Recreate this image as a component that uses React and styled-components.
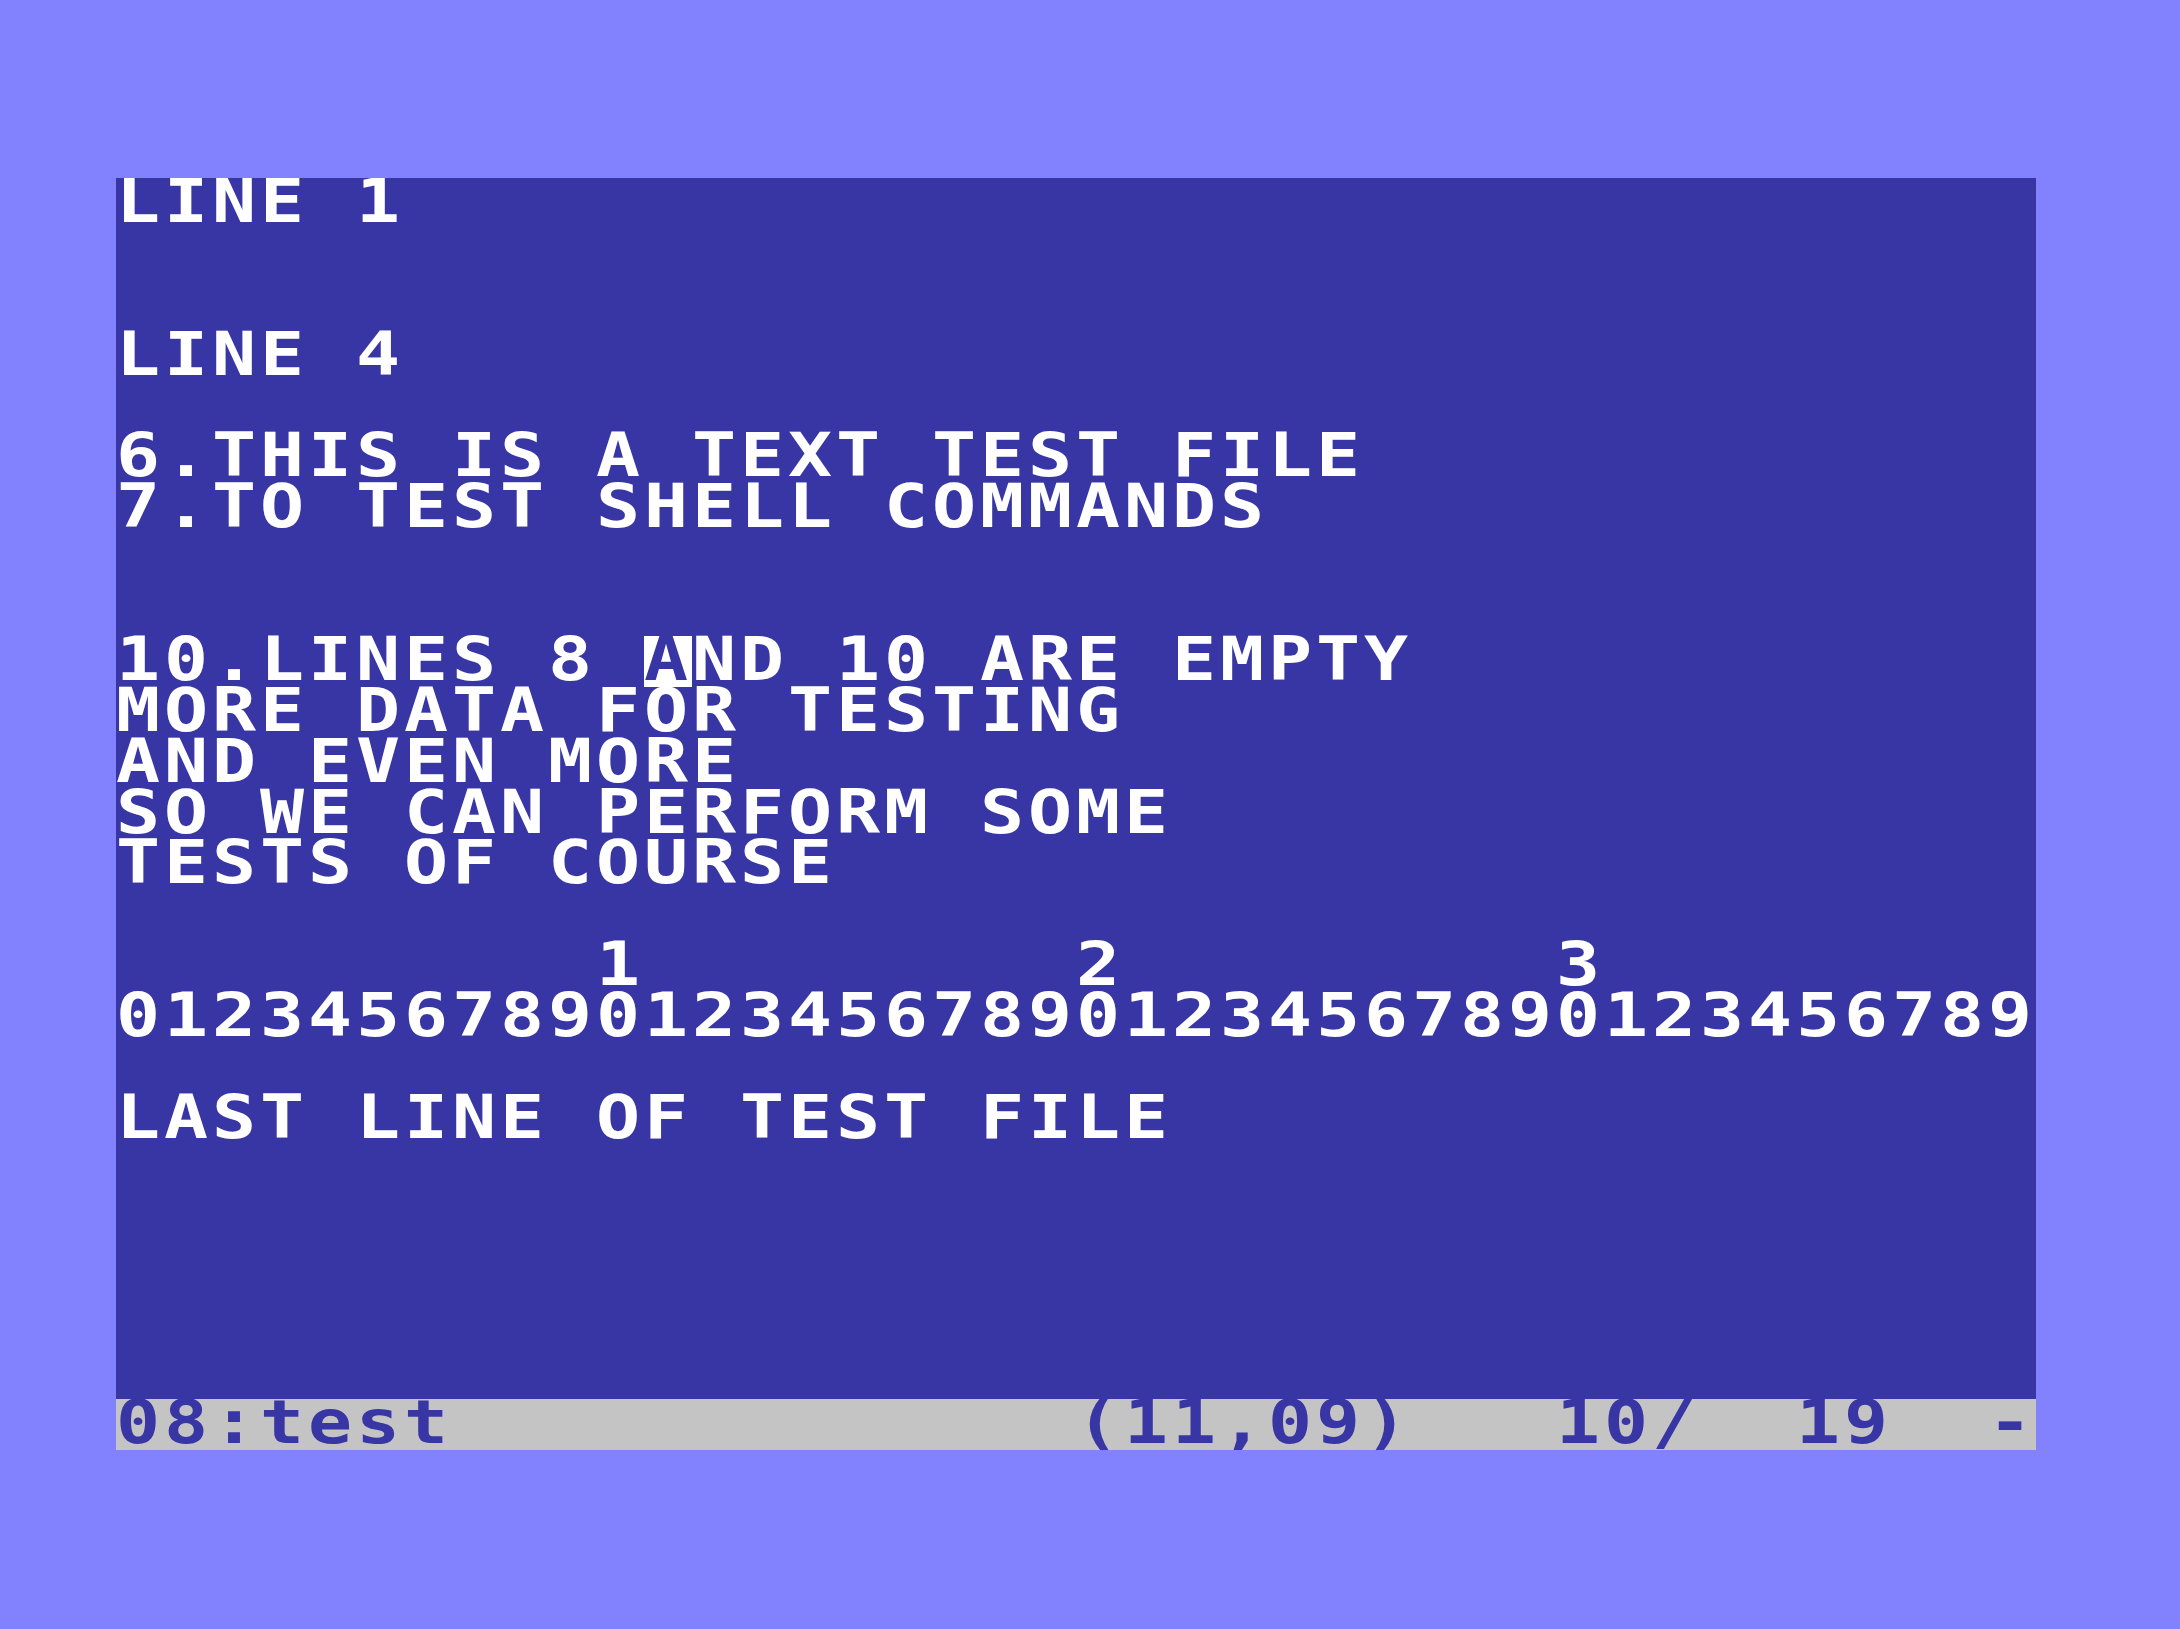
import styled, { createGlobalStyle } from "styled-components";

const BORDER = "#8382fe";
const SCREEN = "#3736a4";
const INK = "#ffffff";
const BAR = "#c4c4c4";

const Global = createGlobalStyle`
  html, body {
    margin: 0;
    padding: 0;
    background: ${BORDER};
  }
`;

const Frame = styled.div`
  width: 2180px;
  height: 1629px;
  box-sizing: border-box;
  padding: 178px 0 0 116px;
  background: ${BORDER};
`;

const Screen = styled.div`
  width: 1920px;
  height: 1272px;
  background: ${SCREEN};
  display: grid;
  grid-template-rows: repeat(25, 1fr);
  overflow: hidden;
`;

const Row = styled.div`
  background: ${props => (props.$status ? BAR : "transparent")};
  overflow: visible;
`;

// C64 cells are 8 wide pixels: the text is stretched sideways by 1.2
// so 40 columns of 40px fill the 1920px screen.
const Text = styled.div`
  width: 1600px;
  transform: scaleX(1.2);
  transform-origin: left top;
  font-family: "DejaVu Sans Mono", "Liberation Mono", monospace;
  font-weight: bold;
  font-size: 61px;
  letter-spacing: 3.275px;
  line-height: 46.8px;
  white-space: pre;
  color: ${props => (props.$status ? SCREEN : INK)};
`;

const Cursor = styled.span`
  display: inline-block;
  width: 40px;
  height: 50.88px;
  vertical-align: top;
  background: ${INK};
  color: ${SCREEN};
`;

const lines = [
  "LINE 1",
  "",
  "",
  "LINE 4",
  "",
  "6.THIS IS A TEXT TEST FILE",
  "7.TO TEST SHELL COMMANDS",
  "",
  "",
  null,
  "MORE DATA FOR TESTING",
  "AND EVEN MORE",
  "SO WE CAN PERFORM SOME",
  "TESTS OF COURSE",
  "",
  "          1         2         3",
  "0123456789012345678901234567890123456789",
  "",
  "LAST LINE OF TEST FILE",
  "",
  "",
  "",
  "",
  "",
];

function App() {
  return (
    <Frame>
      <Global />
      <Screen>
        {lines.map((text, i) => (
          <Row key={i}>
            {text === null ? (
              <Text>
                10.LINES 8 <Cursor>A</Cursor>ND 10 ARE EMPTY
              </Text>
            ) : (
              <Text>{text}</Text>
            )}
          </Row>
        ))}
        <Row $status>
          <Text $status>{"08:test             (11,09)   10/  19  -"}</Text>
        </Row>
      </Screen>
    </Frame>
  );
}

export default App;
